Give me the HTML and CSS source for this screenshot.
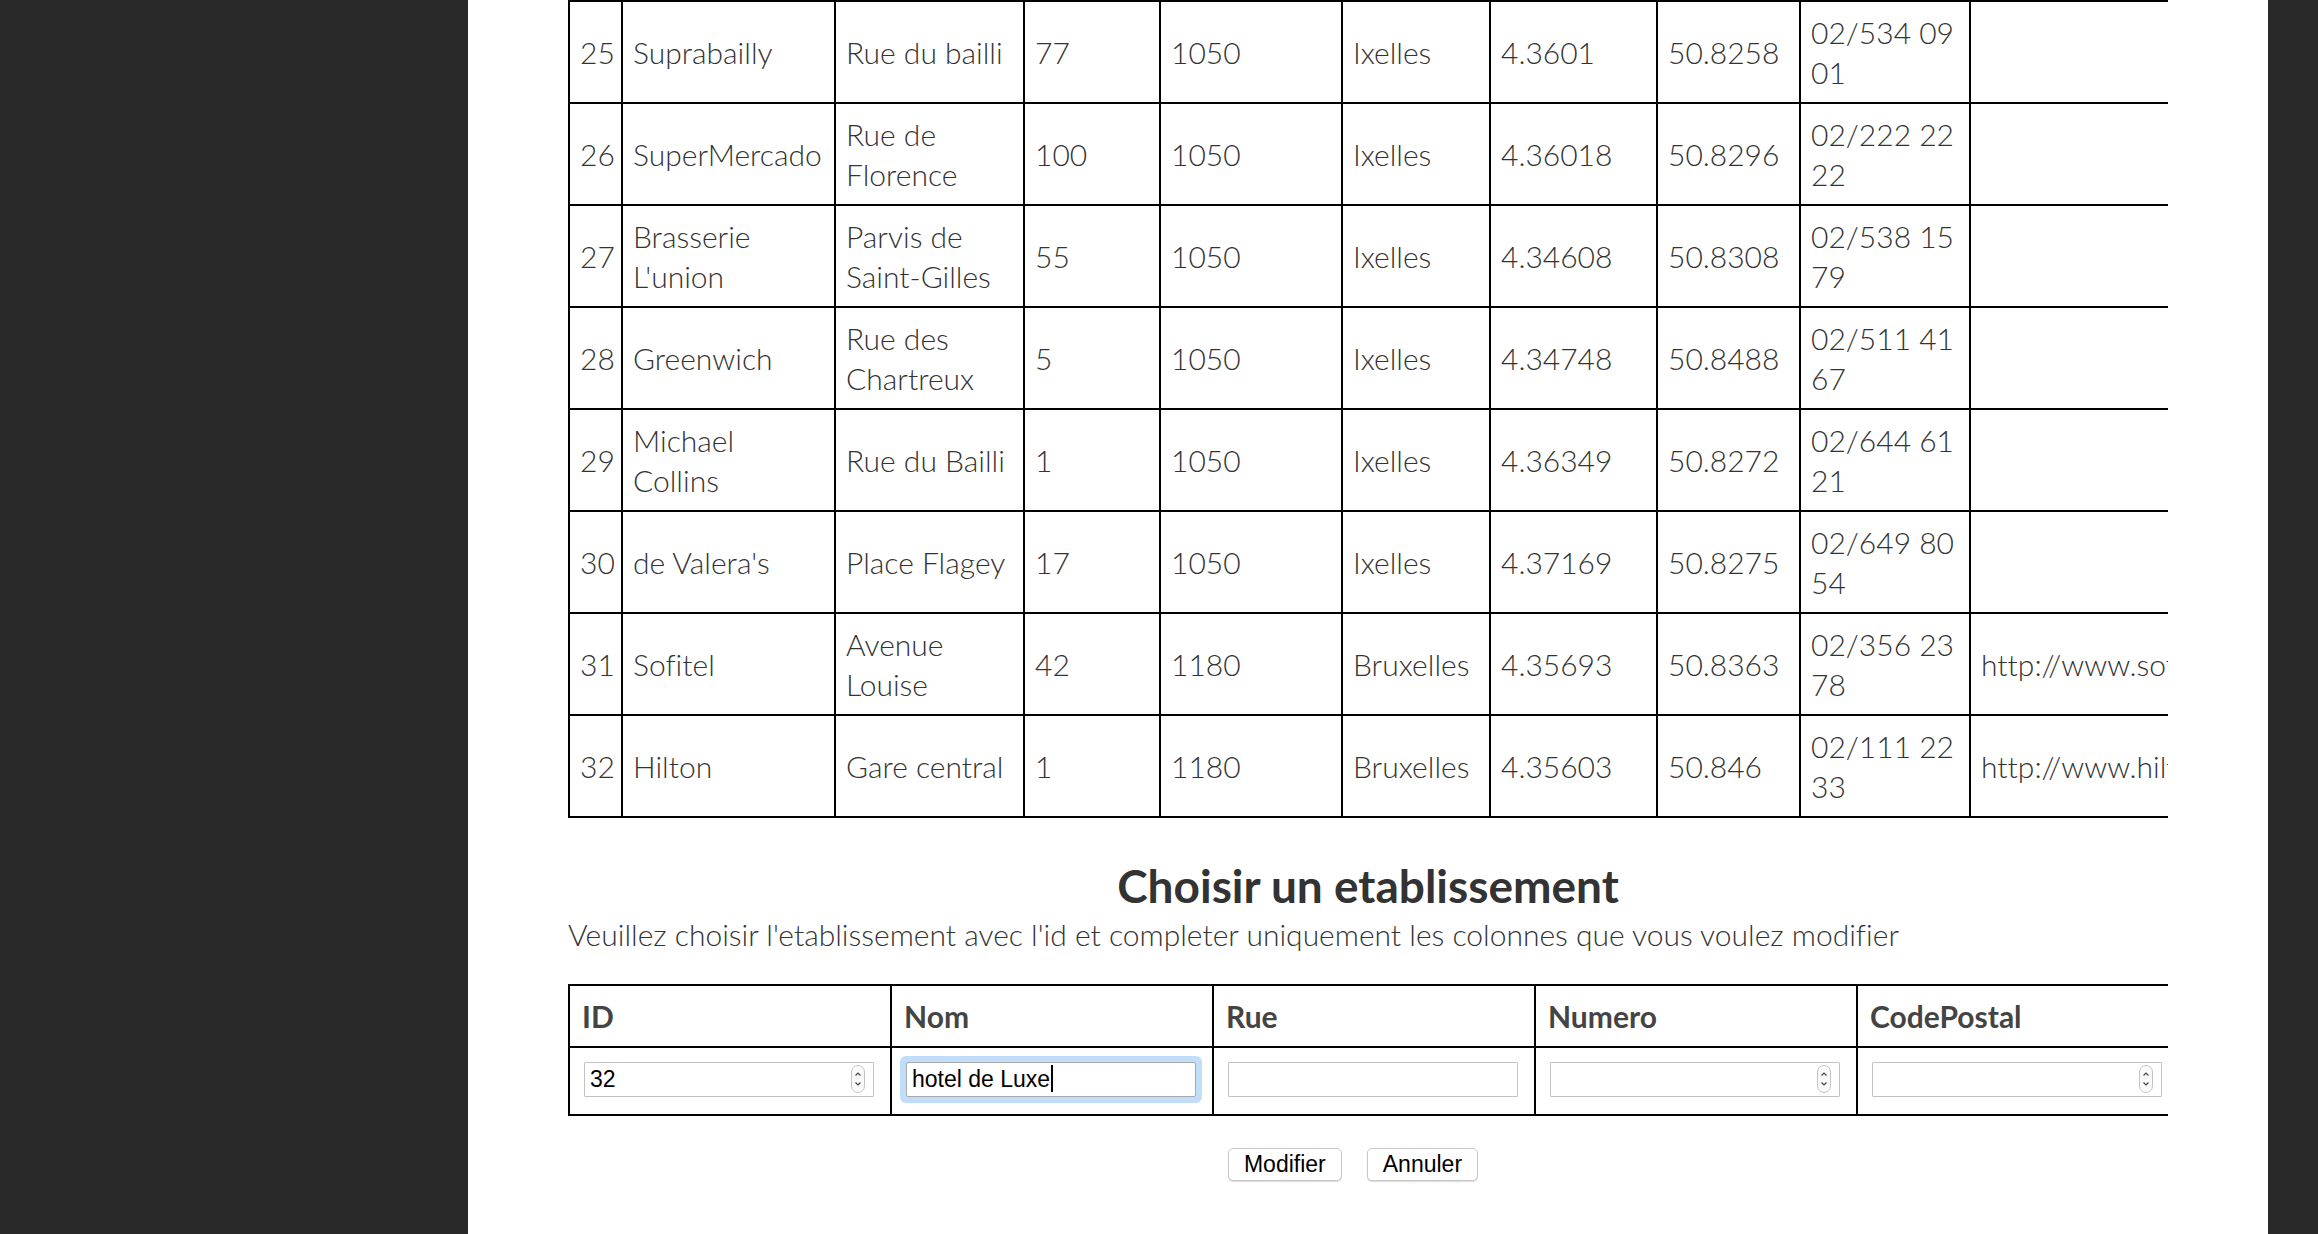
FILE: index.html
```html
<!DOCTYPE html>
<html lang="fr">
<head>
<meta charset="utf-8">
<title>Etablissements</title>
<link rel="stylesheet" href="styles.css">
</head>
<body>
<div class="page">
  <aside class="side side-left"></aside>
  <main class="panel">
    <div class="scroller">
      <table class="data">
        <colgroup>
          <col class="c-id"><col class="c-nom"><col class="c-rue"><col class="c-num"><col class="c-cp"><col class="c-ville"><col class="c-lon"><col class="c-lat"><col class="c-tel"><col class="c-site">
        </colgroup>
        <tbody>
          <tr><td>25</td><td>Suprabailly</td><td>Rue du bailli</td><td>77</td><td>1050</td><td>Ixelles</td><td>4.3601</td><td>50.8258</td><td>02/534 09 01</td><td></td></tr>
          <tr><td>26</td><td>SuperMercado</td><td>Rue de Florence</td><td>100</td><td>1050</td><td>Ixelles</td><td>4.36018</td><td>50.8296</td><td>02/222 22 22</td><td></td></tr>
          <tr><td>27</td><td>Brasserie L'union</td><td>Parvis de Saint-Gilles</td><td>55</td><td>1050</td><td>Ixelles</td><td>4.34608</td><td>50.8308</td><td>02/538 15 79</td><td></td></tr>
          <tr><td>28</td><td>Greenwich</td><td>Rue des Chartreux</td><td>5</td><td>1050</td><td>Ixelles</td><td>4.34748</td><td>50.8488</td><td>02/511 41 67</td><td></td></tr>
          <tr><td>29</td><td>Michael Collins</td><td>Rue du Bailli</td><td>1</td><td>1050</td><td>Ixelles</td><td>4.36349</td><td>50.8272</td><td>02/644 61 21</td><td></td></tr>
          <tr><td>30</td><td>de Valera's</td><td>Place Flagey</td><td>17</td><td>1050</td><td>Ixelles</td><td>4.37169</td><td>50.8275</td><td>02/649 80 54</td><td></td></tr>
          <tr><td>31</td><td>Sofitel</td><td>Avenue Louise</td><td>42</td><td>1180</td><td>Bruxelles</td><td>4.35693</td><td>50.8363</td><td>02/356 23 78</td><td class="url">http://www.sofitel.com</td></tr>
          <tr><td>32</td><td>Hilton</td><td>Gare central</td><td>1</td><td>1180</td><td>Bruxelles</td><td>4.35603</td><td>50.846</td><td>02/111 22 33</td><td class="url">http://www.hilton.com</td></tr>
        </tbody>
      </table>
    </div>

    <h2 class="title">Choisir un etablissement</h2>
    <p class="hint">Veuillez choisir l'etablissement avec l'id et completer uniquement les colonnes que vous voulez modifier</p>

    <form class="edit">
      <div class="scroller">
        <table class="edit-table">
          <thead>
            <tr><th>ID</th><th>Nom</th><th>Rue</th><th>Numero</th><th>CodePostal</th></tr>
          </thead>
          <tbody>
            <tr>
              <td>
                <span class="num">
                  <input class="field" type="text" value="32">
                  <svg class="spin" viewBox="0 0 14 28" width="14" height="28"><rect x="0.5" y="0.5" width="13" height="27" rx="6.5" fill="#fafafa" stroke="#c4c4c4"/><path d="M4.5 10.5 L7 8 L9.5 10.5" fill="none" stroke="#444" stroke-width="1.2"/><path d="M4.5 17.5 L7 20 L9.5 17.5" fill="none" stroke="#444" stroke-width="1.2"/></svg>
                </span>
              </td>
              <td><div class="field focused">hotel de Luxe<span class="caret"></span></div></td>
              <td><input class="field" type="text" value=""></td>
              <td>
                <span class="num">
                  <input class="field" type="text" value="">
                  <svg class="spin" viewBox="0 0 14 28" width="14" height="28"><rect x="0.5" y="0.5" width="13" height="27" rx="6.5" fill="#fafafa" stroke="#c4c4c4"/><path d="M4.5 10.5 L7 8 L9.5 10.5" fill="none" stroke="#444" stroke-width="1.2"/><path d="M4.5 17.5 L7 20 L9.5 17.5" fill="none" stroke="#444" stroke-width="1.2"/></svg>
                </span>
              </td>
              <td>
                <span class="num">
                  <input class="field" type="text" value="">
                  <svg class="spin" viewBox="0 0 14 28" width="14" height="28"><rect x="0.5" y="0.5" width="13" height="27" rx="6.5" fill="#fafafa" stroke="#c4c4c4"/><path d="M4.5 10.5 L7 8 L9.5 10.5" fill="none" stroke="#444" stroke-width="1.2"/><path d="M4.5 17.5 L7 20 L9.5 17.5" fill="none" stroke="#444" stroke-width="1.2"/></svg>
                </span>
              </td>
            </tr>
          </tbody>
        </table>
      </div>
      <div class="actions">
        <button type="button" class="btn">Modifier</button>
        <button type="button" class="btn">Annuler</button>
      </div>
    </form>
  </main>
  <aside class="side side-right"></aside>
</div>
</body>
</html>
```

FILE: styles.css
```css
html, body {
  margin: 0;
  padding: 0;
  background: #292929;
}

body {
  font-family: "Lato", "Liberation Sans", sans-serif;
  font-variant-ligatures: none;
  color: #333;
}

.page {
  display: flex;
  height: 1234px;
  overflow: hidden;
}

.side {
  background: #292929;
}

.side-left {
  flex: 0 0 468px;
}

.side-right {
  flex: 1 1 auto;
  min-width: 0;
}

.panel {
  flex: 0 0 1800px;
  width: 1800px;
  min-width: 0;
  box-sizing: border-box;
  padding: 0 100px;
  background: #fff;
}

.scroller {
  overflow: hidden;
  width: 100%;
}

/* ---------- data table ---------- */
.data {
  border-collapse: separate;
  border-spacing: 0;
  table-layout: fixed;
  width: 1821px;
  border-top: 2px solid #000;
  border-left: 2px solid #000;
  font-size: 30px;
  font-weight: 300;
  line-height: 40px;
  color: #333;
}

.data td {
  border-right: 2px solid #000;
  border-bottom: 2px solid #000;
  padding: 10px 10px;
  vertical-align: middle;
  overflow: hidden;
}

.data .url {
  white-space: nowrap;
}

.c-id { width: 53px; }
.c-nom { width: 213px; }
.c-rue { width: 189px; }
.c-num { width: 136px; }
.c-cp { width: 182px; }
.c-ville { width: 148px; }
.c-lon { width: 167px; }
.c-lat { width: 143px; }
.c-tel { width: 170px; }
.c-site { width: 420px; }

/* ---------- heading ---------- */
.title {
  margin: 42px 0 0;
  text-align: center;
  font-size: 46px;
  line-height: 52px;
  font-weight: 700;
  color: #333;
}

.hint {
  margin: 2px 0 0;
  font-size: 30px;
  line-height: 40px;
  font-weight: 300;
  color: #333;
}

/* ---------- edit table ---------- */
.edit {
  margin: 30px 0 0;
}

.edit-table {
  border-collapse: separate;
  border-spacing: 0;
  table-layout: fixed;
  width: 1612px;
  border-top: 2px solid #000;
  border-left: 2px solid #000;
}

.edit-table th,
.edit-table td {
  width: 322px;
  box-sizing: border-box;
  border-right: 2px solid #000;
  border-bottom: 2px solid #000;
}

.edit-table th {
  padding: 10px 12px;
  text-align: left;
  font-size: 30px;
  line-height: 40px;
  font-weight: 700;
  color: #444;
}

.edit-table td {
  padding: 14px 14px 17px;
  vertical-align: middle;
}

.num {
  position: relative;
  display: block;
  width: 290px;
}

.field {
  display: block;
  box-sizing: border-box;
  width: 290px;
  height: 35px;
  margin: 0;
  padding: 0 5px;
  border: 1px solid #c2c2c2;
  border-radius: 1px;
  background: #fff;
  font-family: "Liberation Sans", Arial, sans-serif;
  font-size: 23px;
  line-height: 33px;
  color: #000;
  outline: none;
}

.field.focused {
  border-color: #a9a9a9;
  border-radius: 2px;
  box-shadow: 0 0 0 6px #c2ddf9;
  white-space: nowrap;
}

.caret {
  display: inline-block;
  width: 2px;
  height: 27px;
  margin-left: 1px;
  background: #000;
  vertical-align: -5px;
}

.spin {
  position: absolute;
  right: 9px;
  top: 3px;
}

/* ---------- buttons ---------- */
.actions {
  display: flex;
  justify-content: center;
  gap: 25px;
  margin-top: 32px;
  padding-right: 30px;
}

.btn {
  height: 33px;
  padding: 0 15px;
  border: 1px solid #c8c8c8;
  border-radius: 5px;
  background: #fff;
  box-shadow: 0 1px 1px rgba(0, 0, 0, 0.14);
  font-family: "Liberation Sans", Arial, sans-serif;
  font-size: 23px;
  line-height: 31px;
  color: #000;
}
```
